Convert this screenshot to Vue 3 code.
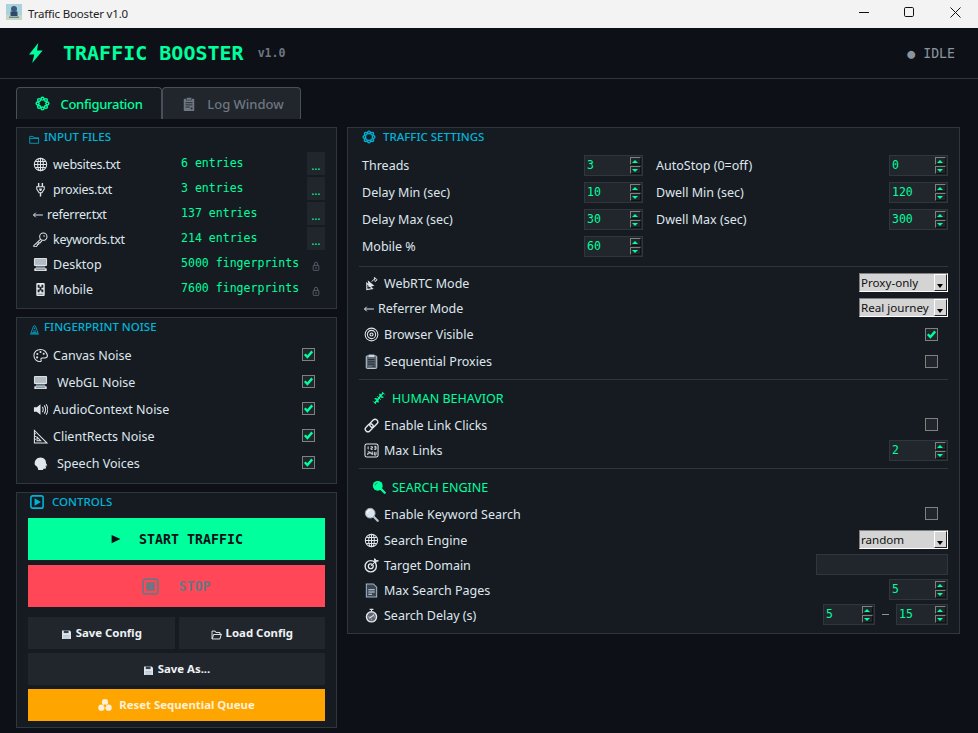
<script setup>
import { h } from 'vue'

const S = 'fill="none" stroke="currentColor" stroke-width="1.1"'
const petals = [0, 45, 90, 135, 180, 225, 270, 315]
  .map(a => {
    const x = (8 + 5.2 * Math.cos(a * Math.PI / 180)).toFixed(2)
    const y = (8 + 5.2 * Math.sin(a * Math.PI / 180)).toFixed(2)
    return `<circle cx="${x}" cy="${y}" r="2.3" fill="currentColor"/><circle cx="${x}" cy="${y}" r=".8" fill="#161b22"/>`
  }).join('')
const disk = `<path d="M1.5 2h11l2 2v10.5h-13z" fill="#e4ebf2"/><rect x="4" y="2.4" width="7" height="3.6" fill="#39414d"/><rect x="3.4" y="8.6" width="9" height="5.4" fill="#a9bdd0"/><path d="M3.4 10.4h9M3.4 12.2h9" stroke="#eef3f7" stroke-width=".8"/>`
const desktop = `<rect x="1" y="1" width="14" height="8.6" rx="1" fill="#dfe4e9"/><rect x="2" y="2" width="12" height="6.4" fill="#b3bbc3"/><rect x="3" y="10" width="10" height="1.6" fill="#8fa3b5"/><rect x="1.4" y="12" width="13.2" height="3" rx=".6" fill="#e6eaee"/><path d="M3 13.5h10" stroke="#76828c"/>`
const icons = {
  bolt: `<path d="M9.8 0 2.4 9.2h4.2L5 16l8.3-10H8.8z" fill="currentColor"/>`,
  flower: petals,
  log: `<rect x="2" y="2" width="12" height="14" rx="1" fill="currentColor"/><rect x="5" y=".5" width="6" height="3" fill="currentColor" stroke="#21262d" stroke-width=".6"/><path d="M4 6.5h8M4 9h8M4 11.5h5" stroke="#21262d"/><rect x="10" y="12" width="2" height="2" fill="#21262d"/>`,
  folder: `<path d="M1 5.5V13.5h13V5.5H7L6 3.5H1z" ${S}/><path d="M1 6.5h13" ${S}/>`,
  globe: `<circle cx="8" cy="8" r="6.6" ${S}/><ellipse cx="8" cy="8" rx="3" ry="6.6" ${S}/><path d="M8 1.4v13.2M1.4 8h13.2M2.4 4.7h11.2M2.4 11.3h11.2" ${S}/>`,
  plug: `<path d="M6 1v4M10 1v4" stroke="currentColor" stroke-width="1.5"/><path d="M4 5h8v2.5L9.5 11.5h-3L4 7.5z" ${S}/><path d="M6.4 7h3.2l-.8 2.6H7.2z" fill="currentColor"/><path d="M8 11.5v4" stroke="currentColor" stroke-width="1.5"/>`,
  arrow: `<path d="M4.4 4.4 .8 8l3.6 3.6" fill="none" stroke="currentColor" stroke-width="1.6"/><path d="M.8 8h15" fill="none" stroke="currentColor" stroke-width="1.6"/>`,
  key: `<circle cx="11" cy="5" r="3.9" ${S}/><circle cx="11.8" cy="4.2" r=".8" fill="currentColor"/><path d="M8.2 7.6 .8 14.6 1 15.8H3.2L4.6 14.4V13H6V11.6H7.4L9.6 9.2" ${S}/>`,
  desktop,
  mobile: `<rect x="3.5" y="1" width="9" height="14" rx="1.2" fill="#e6eaee"/><path d="M5 3h2v2h2V3h2v3H9v2h2v3H9V9H7v2H5V8h2V6H5z" fill="#1d2229"/><rect x="5" y="12.5" width="6" height="1" fill="#6c7680"/>`,
  lock: `<path d="M5.4 7V4.6a2.6 2.6 0 0 1 5.2 0V7" ${S}/><rect x="3.5" y="7" width="9" height="8" rx="1" ${S}/><path d="M8 9.6v2.6" stroke="currentColor" stroke-width="1.4"/>`,
  noise: `<path d="M1.5 14.5h13" stroke="currentColor" stroke-width="1.4"/><path d="M3 13 6 4.5a2 2 0 0 1 4 0L13 13z" ${S}/><circle cx="8" cy="6" r="1" fill="currentColor"/><path d="M6 10h4M5.4 12h5.2" ${S}/>`,
  palette: `<path d="M8 1.5C3.8 1.5 1 4.4 1 8s3 6.5 6.4 6.5c1.5 0 1.6-1 1.2-1.8-.5-1 .1-2 1.3-2h2.6c1.6 0 2.9-1 2.9-2.7C14.4 4.2 11.7 1.5 8 1.5z" ${S}/><circle cx="4.6" cy="6.4" r="1.1" fill="currentColor"/><circle cx="8" cy="4.2" r="1.1" fill="currentColor"/><circle cx="11.4" cy="6.2" r="1.1" fill="currentColor"/><circle cx="4.4" cy="10" r="1.1" fill="currentColor"/>`,
  speaker: `<path d="M1 5.5h3L8 2.5v11l-4-3H1z" fill="currentColor"/><path d="M10 5.2c1 1.6 1 4 0 5.6M12 3.6c1.8 2.6 1.8 6.2 0 8.8M14 2.4c2.2 3.2 2.2 8 0 11.2" ${S}/>`,
  rule: `<path d="M1.5 1.5v13.5h13.5z" ${S} stroke-width="1.3"/><path d="M4.3 8.6v3.9h3.9z" ${S}/><path d="M1.5 5h1.6M1.5 8h1.6M1.5 11h1.6" ${S}/>`,
  head: `<path d="M2 9.5C1 5 4 1.5 8 1.5s6 3 5.8 5.5c0 1 1 2 1.4 3l-1.4.4v2c0 1-1 1.4-3 1.2V15H5.5c0-1.4 0-3-3.5-5.5z" fill="currentColor"/><path d="M13 11h1.5" stroke="#7d8994"/>`,
  playbox: `<rect x="1" y="1" width="14" height="14" rx="2" fill="none" stroke="currentColor" stroke-width="1.8"/><path d="M5.2 3.8v8.4L12.4 8z" fill="currentColor"/>`,
  play: `<path d="M1 1.4v13.2L15 8z" fill="currentColor"/>`,
  stop: `<rect x="1" y="1" width="14" height="14" rx="2.4" fill="none" stroke="currentColor" stroke-width="1.6"/><rect x="4" y="4" width="8" height="8" fill="currentColor"/>`,
  save: disk,
  open: `<path d="M1.5 5V14.5h11.5L15 7.5H13V5H7L6 3H1.5z" fill="none" stroke="#e4ebf2" stroke-width="1.4"/><path d="M1.8 14.3 3.8 8h11" fill="none" stroke="#e4ebf2" stroke-width="1.4"/>`,
  recycle: `<circle cx="8" cy="4.6" r="3.6" fill="currentColor"/><circle cx="3.9" cy="11" r="3.6" fill="currentColor"/><circle cx="12.1" cy="11" r="3.6" fill="currentColor"/><path d="M8 6.6 6 9.8h4z" fill="#ffa500"/>`,
  dish: `<path d="M3 7.5 9 13.5 3 14.5z" fill="none" stroke="currentColor" stroke-width="1.2"/><path d="M4 4.5 11 10.5 5 12z" fill="currentColor"/><path d="M8 6 12 2.5M11 1.5l3 2.5-2 2z" stroke="currentColor"/>`,
  eye: `<circle cx="8" cy="8" r="6.8" ${S}/><circle cx="8" cy="8" r="4.4" ${S}/><circle cx="8" cy="8" r="2.2" fill="currentColor"/><circle cx="8" cy="8" r="1" fill="#161b22"/>`,
  list: `<rect x="2.4" y="2" width="11.2" height="13.4" rx="1" fill="#5b6774" stroke="#c9d6e2" stroke-width="1"/><rect x="5" y=".6" width="6" height="2.6" fill="#c9d6e2"/><path d="M4.4 6h7M4.4 8.4h7M4.4 10.8h7M9 13h2.6" stroke="#1d2229"/>`,
  dna: `<path d="M3 13.5C6 12 10 4 13 2.5M3 9C5.5 8.5 7 10 7 13M9 3c0 3 1.5 4.5 4 4" fill="none" stroke="currentColor" stroke-width="1.7"/><path d="M1.5 12 4.5 15M11.5 1 14.5 4M6 6l4 4" stroke="currentColor" stroke-width="1.1"/>`,
  link: `<rect x="-4.8" y="-2.8" width="9.6" height="5.6" rx="2.8" transform="translate(5.6 10.4) rotate(-45)" fill="none" stroke="currentColor" stroke-width="1.5"/><rect x="-4.8" y="-2.8" width="9.6" height="5.6" rx="2.8" transform="translate(10.4 5.6) rotate(-45)" fill="none" stroke="currentColor" stroke-width="1.5"/>`,
  num: `<rect x="1" y="1" width="14" height="14" rx="2" ${S} stroke-width="1.3"/><path d="M4.4 3.6v3.2M7 4h2v1.4H7.4v1.4H9.2M11 3.6h1.8v1.6H11m1.8 0v1.6H11M4 9.4h1.8v1.6H4v1.8M7.2 9.4v2h2M8.8 9v3.8M11 9.4v3.4h1.8v-3.4" fill="none" stroke="currentColor"/>`,
  lens: `<path d="M10.2 10.2 14.6 14.6" stroke="#b9c2ca" stroke-width="2.4" stroke-linecap="round"/><circle cx="6.6" cy="6.6" r="5.2" fill="#dbe4ec" stroke="#9aa6b0"/><path d="M3.4 6.4a3.4 3.4 0 0 1 3-3" fill="none" stroke="#fff"/>`,
  lensG: `<path d="M10.2 10.2 14.6 14.6" stroke="currentColor" stroke-width="2.6" stroke-linecap="round"/><circle cx="6.6" cy="6.6" r="5.6" fill="currentColor"/><path d="M3.4 6.4a3.4 3.4 0 0 1 3-3" fill="none" stroke="#0b8a5c"/>`,
  target: `<circle cx="7.2" cy="8.8" r="6" fill="none" stroke="currentColor" stroke-width="1.5"/><circle cx="7.2" cy="8.8" r="2.6" fill="none" stroke="currentColor" stroke-width="1.4"/><path d="M7.2 8.8 13 3M11 3l.4-2.4L13 2.6l2.4.4-2.4.8-.6 1.6z" fill="currentColor" stroke="currentColor"/>`,
  page: `<path d="M2.5 1H10l3.5 3.5V15h-11z" fill="#3a4653" stroke="#9fb4c8" stroke-width="1.1"/><path d="M4.6 7.2h6.8M4.6 9.6h6.8M4.6 12h4" stroke="#d2dae2" stroke-width="1.2"/>`,
  timer: `<circle cx="8" cy="9.4" r="5.4" fill="#5b6774" stroke="currentColor" stroke-width="1.5"/><path d="M6 1.4h4M8 1.4v2.4M8 9.4l2.8-2.4M8 9.4 5.5 11" stroke="currentColor" stroke-width="1.2"/><path d="M4.2 9.4h1.6M10.2 9.4h1.6M8 11.4V13" stroke="#d99" stroke-width="1"/>`
}

const Ico = (props) => h('svg', {
  class: 'ico',
  width: props.size || 15,
  height: props.size || 15,
  viewBox: '0 0 16 16',
  'aria-hidden': 'true',
  innerHTML: icons[props.n]
})
Ico.props = ['n', 'size']

const files = [
  { icon: 'globe', name: 'websites.txt', val: '6 entries', kind: 'file' },
  { icon: 'plug', name: 'proxies.txt', val: '3 entries', kind: 'file' },
  { icon: 'arrow', name: 'referrer.txt', val: '137 entries', kind: 'file', small: true },
  { icon: 'key', name: 'keywords.txt', val: '214 entries', kind: 'file' },
  { icon: 'desktop', name: 'Desktop', val: '5000 fingerprints', kind: 'lock' },
  { icon: 'mobile', name: 'Mobile', val: '7600 fingerprints', kind: 'lock' }
]
const noises = [
  { icon: 'palette', name: 'Canvas Noise' },
  { icon: 'desktop', name: 'WebGL Noise', wide: true },
  { icon: 'speaker', name: 'AudioContext Noise' },
  { icon: 'rule', name: 'ClientRects Noise' },
  { icon: 'head', name: 'Speech Voices', wide: true }
]
const nums = [
  ['Threads', '3', 'AutoStop (0=off)', '0'],
  ['Delay Min (sec)', '10', 'Dwell Min (sec)', '120'],
  ['Delay Max (sec)', '30', 'Dwell Max (sec)', '300'],
  ['Mobile %', '60', '', '']
]
</script>

<template>
  <div class="win">
    <div class="titlebar">
      <svg class="appicon" width="16" height="16" viewBox="0 0 16 16" aria-hidden="true">
        <rect width="16" height="16" fill="#a9d2de" />
        <rect y="11" width="16" height="5" fill="#c9d8bc" />
        <circle cx="8" cy="5" r="3" fill="#3d5c7a" />
        <rect x="4.5" y="7.5" width="7" height="4.5" fill="#2f4a68" />
        <rect x="3" y="12.5" width="10" height="1.5" fill="#6a8aa0" />
      </svg>
      <span class="wintitle">Traffic Booster v1.0</span>
      <div class="winbtns">
        <svg width="46" height="28" viewBox="0 0 46 28" aria-hidden="true"><path d="M1 12.5h10" stroke="#111" /></svg>
        <svg width="46" height="28" viewBox="0 0 46 28" aria-hidden="true"><rect x=".5" y="7.5" width="9" height="9" rx="1.2" fill="none" stroke="#111" /></svg>
        <svg width="28" height="28" viewBox="0 0 28 28" aria-hidden="true"><path d="M.5 7.5l10 10M10.5 7.5l-10 10" stroke="#111" /></svg>
      </div>
    </div>

    <header class="hdr">
      <Ico n="bolt" :size="20" class="hbolt" />
      <span class="brand">TRAFFIC BOOSTER</span>
      <span class="ver">v1.0</span>
      <span class="idle">● IDLE</span>
    </header>

    <main class="body">
      <nav class="tabs">
        <div class="tab on"><Ico n="flower" :size="15" /><span>Configuration</span></div>
        <div class="tab off"><Ico n="log" :size="14" /><span>Log Window</span></div>
      </nav>

      <div class="cols">
        <div class="left">
          <section class="panel">
            <h2 class="ptitle"><Ico n="folder" :size="11" class="t-ic" /><span>INPUT FILES</span></h2>
            <div v-for="f in files" :key="f.name" class="frow">
              <span class="fname" :class="{ tight: f.small, txt: f.kind === 'file' }"><Ico :n="f.icon" :size="f.small ? 10 : 15" /><span>{{ f.name }}</span></span>
              <span class="fval">{{ f.val }}</span>
              <button v-if="f.kind === 'file'" class="dots">...</button>
              <Ico v-else n="lock" :size="10" class="lock" />
            </div>
          </section>

          <section class="panel">
            <h2 class="ptitle"><Ico n="noise" :size="11" class="t-ic" /><span>FINGERPRINT NOISE</span></h2>
            <div v-for="n in noises" :key="n.name" class="nrow">
              <span class="fname" :class="{ wide: n.wide }"><Ico :n="n.icon" :size="15" /><span>{{ n.name }}</span></span>
              <span class="check on">
                <svg width="11" height="11" viewBox="0 0 11 11" aria-hidden="true"><path d="M1.8 5.2 4.4 8 9.2 2.4" fill="none" stroke="#00ff9d" stroke-width="2.4" /></svg>
              </span>
            </div>
          </section>

          <section class="panel grow">
            <h2 class="ptitle ctl"><Ico n="playbox" :size="14" class="t-ic" /><span>CONTROLS</span></h2>
            <button class="big start"><Ico n="play" :size="10" /><span>START TRAFFIC</span></button>
            <button class="big stop"><Ico n="stop" :size="17" /><span>STOP</span></button>
            <div class="pair">
              <button class="act"><Ico n="save" :size="11" /><span>Save Config</span></button>
              <button class="act"><Ico n="open" :size="11" /><span>Load Config</span></button>
            </div>
            <button class="act solo"><Ico n="save" :size="11" /><span>Save As...</span></button>
            <button class="act reset"><Ico n="recycle" :size="14" /><span>Reset Sequential Queue</span></button>
          </section>
        </div>

        <section class="panel right">
          <h2 class="ptitle st"><Ico n="flower" :size="14" class="t-ic" /><span>TRAFFIC SETTINGS</span></h2>

          <div v-for="r in nums" :key="r[0]" class="grid">
            <span>{{ r[0] }}</span>
            <div class="spin"><span>{{ r[1] }}</span><i class="sb"><b class="u"></b><b class="d"></b></i></div>
            <span>{{ r[2] }}</span>
            <div v-if="r[3]" class="spin"><span>{{ r[3] }}</span><i class="sb"><b class="u"></b><b class="d"></b></i></div>
          </div>

          <hr class="sep first" />

          <div class="srow sel">
            <span class="lab low"><Ico n="dish" /><span>WebRTC Mode</span></span>
            <div class="select"><span>Proxy-only</span><i></i></div>
          </div>
          <div class="srow sel">
            <span class="lab tight low"><Ico n="arrow" :size="10" /><span>Referrer Mode</span></span>
            <div class="select"><span>Real journey</span><i></i></div>
          </div>
          <div class="srow ck gap4">
            <span class="lab"><Ico n="eye" /><span>Browser Visible</span></span>
            <span class="check on">
              <svg width="11" height="11" viewBox="0 0 11 11" aria-hidden="true"><path d="M1.8 5.2 4.4 8 9.2 2.4" fill="none" stroke="#00ff9d" stroke-width="2.4" /></svg>
            </span>
          </div>
          <div class="srow ck">
            <span class="lab"><Ico n="list" /><span>Sequential Proxies</span></span>
            <span class="check"></span>
          </div>

          <hr class="sep" />
          <h3 class="sub"><Ico n="dna" :size="14" /><span>HUMAN BEHAVIOR</span></h3>
          <div class="srow ck g3">
            <span class="lab low"><Ico n="link" /><span>Enable Link Clicks</span></span>
            <span class="check"></span>
          </div>
          <div class="srow spn">
            <span class="lab"><Ico n="num" /><span>Max Links</span></span>
            <div class="spin"><span>2</span><i class="sb"><b class="u"></b><b class="d"></b></i></div>
          </div>

          <hr class="sep s2" />
          <h3 class="sub"><Ico n="lensG" :size="14" /><span>SEARCH ENGINE</span></h3>
          <div class="srow ck g3">
            <span class="lab low"><Ico n="lens" /><span>Enable Keyword Search</span></span>
            <span class="check"></span>
          </div>
          <div class="srow sel g3">
            <span class="lab low"><Ico n="globe" /><span>Search Engine</span></span>
            <div class="select"><span>random</span><i></i></div>
          </div>
          <div class="srow h21 gap5">
            <span class="lab low"><Ico n="target" /><span>Target Domain</span></span>
            <div class="textin"></div>
          </div>
          <div class="srow h21 gap4">
            <span class="lab low"><Ico n="page" /><span>Max Search Pages</span></span>
            <div class="spin"><span>5</span><i class="sb"><b class="u"></b><b class="d"></b></i></div>
          </div>
          <div class="srow h21 gap4">
            <span class="lab low"><Ico n="timer" /><span>Search Delay (s)</span></span>
            <div class="range">
              <div class="spin sm"><span>5</span><i class="sb"><b class="u"></b><b class="d"></b></i></div>
              <em class="dash"></em>
              <div class="spin sm"><span>15</span><i class="sb"><b class="u"></b><b class="d"></b></i></div>
            </div>
          </div>
        </section>
      </div>
    </main>
  </div>
</template>

<style>
html, body { margin: 0; background: #0d1117; overflow: hidden; }
</style>

<style scoped>
.win {
  width: 978px;
  height: 733px;
  overflow: hidden;
  background: #0d1117;
  color: #dfe6ec;
  font-family: "Noto Sans", "Open Sans", sans-serif;
  font-size: 12.5px;
  display: flex;
  flex-direction: column;
}
.ico { flex: none; display: block; }

.titlebar {
  height: 28px;
  flex: none;
  background: #f3f3f3;
  display: flex;
  align-items: center;
  color: #222;
  font-size: 11.5px;
  letter-spacing: -0.18px;
  padding-left: 6px;
}
.appicon { margin-right: 6px; margin-top: -4px; }
.wintitle { margin-top: -2px; }
.winbtns { margin-left: auto; display: flex; }
.winbtns svg { display: block; }

.hdr {
  height: 50px;
  flex: none;
  border-bottom: 1px solid #30363d;
  display: flex;
  align-items: center;
  padding: 0 23px 0 26px;
  font-family: "DejaVu Sans Mono", "Liberation Mono", monospace;
}
.hbolt { color: #00ff9d; margin-right: 17px; }
.brand { color: #00ff9d; font-size: 20px; font-weight: 700; }
.ver { color: #6e7681; font-size: 11.6px; font-weight: 700; margin-left: 14px; }
.idle { color: #8b949e; font-size: 13.2px; margin-left: auto; }

.body { padding: 8px 18px 0 16px; flex: 1; min-height: 0; display: flex; flex-direction: column; }
.tabs { display: flex; height: 32px; flex: none; }
.tab {
  display: flex;
  align-items: center;
  justify-content: center;
  gap: 10px;
  box-sizing: border-box;
  height: 32px;
  border: 1px solid #484f58;
  border-bottom: 0;
  border-radius: 4px 4px 0 0;
  font-size: 13px;
  font-weight: 500;
}
.tab.on { width: 146px; background: #161b22; color: #00ff9d; letter-spacing: -0.3px; }
.tab.off { width: 139px; background: #21262d; color: #6e7681; padding-left: 3px; gap: 11px; }

.cols { display: flex; gap: 10px; margin-top: 8px; align-items: flex-start; }
.left { width: 321px; flex: none; display: flex; flex-direction: column; gap: 8px; }
.panel {
  box-sizing: border-box;
  background: #161b22;
  border: 1px solid #30363d;
  padding: 0 11px 6px;
  display: flex;
  flex-direction: column;
}
.right { width: 613px; flex: none; padding-bottom: 8px; }

.ptitle {
  margin: 0 0 6px;
  height: 18px;
  display: flex;
  align-items: center;
  color: #00b4d8;
  font-size: 11.5px;
  font-weight: 500;
  line-height: 18px;
}
.ptitle .t-ic { margin: 0 4px 0 1px; position: relative; top: 2px; }
.ptitle.ctl { margin-bottom: 7px; }
.ptitle.ctl .t-ic { margin: 0 8px 0 2px; top: 0; }
.ptitle.st { margin-bottom: 6px; padding-left: 3px; }
.ptitle.st .t-ic { margin: 0 7px 0 0; top: 0; }

.frow { height: 25px; display: flex; align-items: flex-start; padding-left: 5px; }
.fname { display: flex; align-items: center; gap: 5px; line-height: 25px; height: 25px; }
.fname.tight { gap: 4px; }
.fname.txt > span { letter-spacing: -0.25px; }
.fname.wide { gap: 9px; }
.frow .fname { width: 148px; }
.fval {
  width: 126px;
  line-height: 23px;
  color: #00ff9d;
  font-family: "DejaVu Sans Mono", "Liberation Mono", monospace;
  font-size: 11.55px;
}
.dots {
  width: 18px;
  height: 23px;
  padding: 4px 0 0;
  border: 0;
  background: #21262d;
  color: #00ff9d;
  font: 500 11px "Noto Sans", sans-serif;
}
.lock { color: #6e7681; margin: 9px 0 0 4px; }

.nrow {
  height: 27px;
  display: flex;
  align-items: center;
  justify-content: space-between;
  padding: 0 10px 0 5px;
}
.nrow .check { margin-top: -2px; }
.check {
  box-sizing: border-box;
  width: 13px;
  height: 13px;
  background: #21262d;
  border: 1px solid #808080;
  display: flex;
  align-items: center;
  justify-content: center;
  flex: none;
}
.check svg { display: block; }

button { cursor: default; }
.big {
  height: 42px;
  border: 0;
  display: flex;
  align-items: center;
  justify-content: center;
  font-family: "DejaVu Sans Mono", "Liberation Mono", monospace;
  font-weight: 700;
  font-size: 13.3px;
  padding: 0;
}
.start { background: #00ff9d; color: #0d1117; gap: 18px; padding-left: 1px; }
.stop { background: #ff4757; color: #6e7681; gap: 19px; margin: 5px 0 10px; }
.pair { display: flex; gap: 4px; }
.act {
  height: 32px;
  border: 0;
  background: #21262d;
  color: #eef2f5;
  font: 700 11.4px "Noto Sans", sans-serif;
  display: flex;
  align-items: center;
  justify-content: center;
  gap: 4px;
  padding: 0 0 2px;
}
.act .ico { margin-top: 4px; }
.act.reset .ico { margin-top: 2px; }
.pair .act { flex: 1; }
.solo { margin-top: 4px; }
.reset { margin-top: 4px; background: #ffa500; color: #fff1d6; gap: 7px; }

.grid {
  display: grid;
  grid-template-columns: 209px 59px 220px 59px;
  column-gap: 13px;
  align-items: center;
  height: 27px;
  padding-left: 3px;
}
.spin {
  box-sizing: border-box;
  width: 59px;
  height: 21px;
  background: #21262d;
  border: 1px solid #30363d;
  position: relative;
  color: #00ff9d;
  font-family: "DejaVu Sans Mono", "Liberation Mono", monospace;
  font-size: 11.5px;
  line-height: 19px;
  padding-left: 2px;
}
.spin.sm { width: 52px; }
.sb {
  position: absolute;
  right: 1px;
  top: 1px;
  width: 11px;
  display: flex;
  flex-direction: column;
  gap: 1px;
}
.sb b {
  box-sizing: border-box;
  display: block;
  height: 8px;
  background: #21262d;
  border: 1px solid;
  border-color: #808080 #111 #111 #808080;
  position: relative;
}
.sb b::after {
  content: "";
  position: absolute;
  left: 1px;
  top: 1.5px;
  border-left: 3.5px solid transparent;
  border-right: 3.5px solid transparent;
}
.sb .u::after { border-bottom: 3.5px solid #00ff9d; }
.sb .d::after { border-top: 3.5px solid #00ff9d; }

.sep { border: 0; height: 1px; background: #30363d; width: 100%; margin: 4px 0 0; }
.sep.first, .sep.s2 { margin-top: 6px; }
.srow { display: flex; align-items: center; justify-content: space-between; padding-left: 5px; }
.srow.sel { height: 19px; margin-top: 6px; }
.srow.sel.g3 { margin-top: 3px; }
.srow.ck { height: 27px; padding-right: 10px; }
.srow.gap4 { margin-top: 4px; }
.srow.gap5 { margin-top: 5px; }
.srow.ck.g3 { margin-top: 3px; }
.srow.spn { height: 23px; margin-top: 1px; }
.srow.h21 { height: 21px; }
.lab { display: flex; align-items: center; gap: 5px; }
.lab.tight { gap: 4px; }
.lab.low { padding-top: 2px; }

.sub {
  margin: 8px 0 0;
  height: 20px;
  padding-left: 13px;
  display: flex;
  align-items: center;
  gap: 6px;
  color: #00ff9d;
  font-size: 12.5px;
  font-weight: 400;
}

.select {
  box-sizing: border-box;
  width: 89px;
  height: 19px;
  background: #d4d4d4;
  color: #111;
  border: 1px solid;
  border-color: #808080 #fff #fff #808080;
  font-size: 11.6px;
  line-height: 17px;
  padding-left: 1px;
  position: relative;
}
.select i {
  position: absolute;
  right: 0;
  top: 0;
  box-sizing: border-box;
  width: 13px;
  height: 17px;
  background: #d4d4d4;
  border: 1px solid;
  border-color: #fff #222 #222 #fff;
}
.select i::after {
  content: "";
  position: absolute;
  left: 2px;
  top: 9px;
  border-left: 3.5px solid transparent;
  border-right: 3.5px solid transparent;
  border-top: 4px solid #000;
}
.textin {
  box-sizing: border-box;
  width: 132px;
  height: 21px;
  background: #21262d;
  border: 1px solid #30363d;
}
.range { display: flex; align-items: center; }
.dash { width: 7px; height: 1px; background: #8b949e; margin: 0 7px; }
</style>
